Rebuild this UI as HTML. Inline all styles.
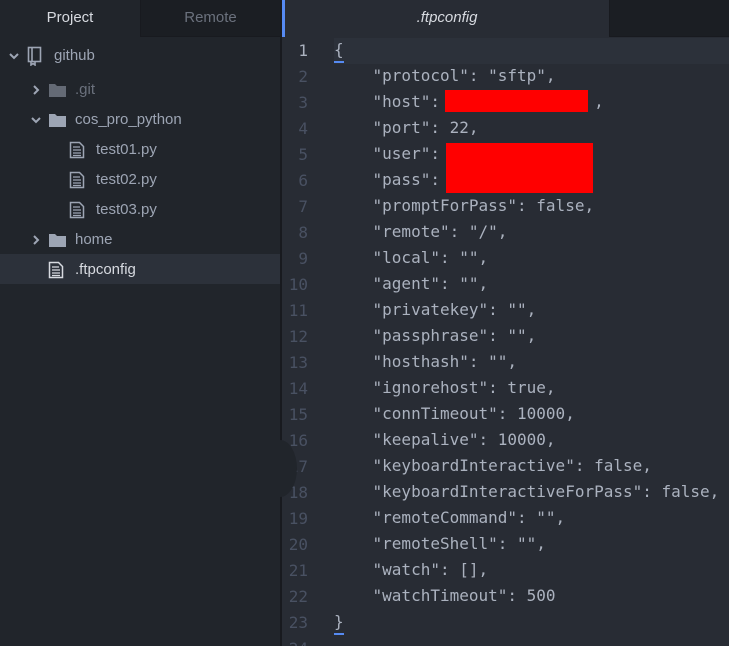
<!DOCTYPE html>
<html style="overflow:hidden"><head><style>
*{margin:0;padding:0;box-sizing:border-box}
body{width:729px;height:646px;overflow:hidden;background:#282c34;font-family:"Liberation Sans",sans-serif;position:relative}
.side{position:absolute;left:0;top:0;width:280px;height:646px;background:#21252b}
.tab{position:absolute;top:0;height:37px;line-height:36px;text-align:center;font-size:15px}
.tree div{position:absolute;height:30px;line-height:30px;font-size:15px;color:#9da5b4;white-space:nowrap}
.code{position:absolute;left:282px;top:37px;width:447px;height:609px;overflow:hidden;background:#282c34}
.ln{position:absolute;width:26px;text-align:right;left:0;font:16px "DejaVu Sans Mono","Liberation Mono",monospace;color:#495162}
.cl{position:absolute;left:52px;font:16px "DejaVu Sans Mono","Liberation Mono",monospace;color:#abb2bf;white-space:pre}
</style></head><body>
<div class="side">
<div class="tab" style="left:0;width:140px;color:#d7dae0;background:#21252b">Project</div>
<div class="tab" style="left:140px;width:140px;color:#6b717d;background:#1b1e23;border-left:1px solid #181a1f;border-bottom:1px solid #181a1f">Remote</div>
<div class="tree">
<div style="top:41px;left:8px"><svg width="12" height="10" style="vertical-align:middle"><path d="M2 3l4 4 4-4" stroke="#9da5b4" stroke-width="2" fill="none"/></svg></div>
<div style="top:41px;left:27px"><svg width="16" height="20" style="vertical-align:middle"><rect x="1.5" y="1.5" width="12" height="14" fill="none" stroke="#9da5b4" stroke-width="1.6"/><path d="M5 2v13M4 15v4l2-1.5 2 1.5v-4" stroke="#9da5b4" stroke-width="1.6" fill="none"/></svg></div>
<div style="top:41px;left:54px">github</div>
<div style="top:75px;left:31px"><svg width="10" height="12" style="vertical-align:middle"><path d="M3 2l4 4-4 4" stroke="#9da5b4" stroke-width="2" fill="none"/></svg></div>
<div style="top:75px;left:48px"><svg width="20" height="16" style="vertical-align:middle"><path d="M1 2h6l2 2h9v11H1z" fill="#646a75"/></svg></div>
<div style="top:75px;left:75px;color:#6b717d">.git</div>
<div style="top:105px;left:30px"><svg width="12" height="10" style="vertical-align:middle"><path d="M2 3l4 4 4-4" stroke="#9da5b4" stroke-width="2" fill="none"/></svg></div>
<div style="top:105px;left:48px"><svg width="20" height="16" style="vertical-align:middle"><path d="M1 2h6l2 2h9v11H1z" fill="#9da5b4"/></svg></div>
<div style="top:105px;left:75px">cos_pro_python</div>
<div style="top:135px;left:69px"><svg width="16" height="18" style="vertical-align:middle"><path d="M1.5 1.5h9l4 4v11h-13z" fill="none" stroke="#9da5b4" stroke-width="1.5"/><path d="M4 6h7M4 9h8M4 12h8M4 14.5h8" stroke="#9da5b4" stroke-width="1.3"/></svg></div>
<div style="top:135px;left:96px">test01.py</div>
<div style="top:165px;left:69px"><svg width="16" height="18" style="vertical-align:middle"><path d="M1.5 1.5h9l4 4v11h-13z" fill="none" stroke="#9da5b4" stroke-width="1.5"/><path d="M4 6h7M4 9h8M4 12h8M4 14.5h8" stroke="#9da5b4" stroke-width="1.3"/></svg></div>
<div style="top:165px;left:96px">test02.py</div>
<div style="top:195px;left:69px"><svg width="16" height="18" style="vertical-align:middle"><path d="M1.5 1.5h9l4 4v11h-13z" fill="none" stroke="#9da5b4" stroke-width="1.5"/><path d="M4 6h7M4 9h8M4 12h8M4 14.5h8" stroke="#9da5b4" stroke-width="1.3"/></svg></div>
<div style="top:195px;left:96px">test03.py</div>
<div style="top:225px;left:31px"><svg width="10" height="12" style="vertical-align:middle"><path d="M3 2l4 4-4 4" stroke="#9da5b4" stroke-width="2" fill="none"/></svg></div>
<div style="top:225px;left:48px"><svg width="20" height="16" style="vertical-align:middle"><path d="M1 2h6l2 2h9v11H1z" fill="#9da5b4"/></svg></div>
<div style="top:225px;left:75px">home</div>
<div style="top:254px;left:0;width:280px;height:30px;background:#2c313a"></div>
<div style="top:255px;left:48px"><svg width="16" height="18" style="vertical-align:middle"><path d="M1.5 1.5h9l4 4v11h-13z" fill="none" stroke="#d7dae0" stroke-width="1.5"/><path d="M4 6h7M4 9h8M4 12h8M4 14.5h8" stroke="#d7dae0" stroke-width="1.3"/></svg></div>
<div style="top:255px;left:75px;color:#d7dae0">.ftpconfig</div>
</div>
</div>
<div style="position:absolute;left:280px;top:0;width:2px;height:646px;background:#181a1f"></div>
<div style="position:absolute;left:282px;top:0;width:447px;height:37px;background:#1b1e23;border-bottom:1px solid #181a1f"></div>
<div style="position:absolute;left:282px;top:0;width:3px;height:37px;background:#568af2"></div>
<div class="tab" style="left:285px;width:325px;background:#282c34;color:#d7dae0;font-style:italic;border-right:1px solid #181a1f">.ftpconfig</div>
<div class="code">
<div style="position:absolute;left:52px;right:0;top:1px;height:26px;background:#2c313a"></div>
<div id="g"></div>
</div>
<div style="position:absolute;left:263px;top:440px;width:34px;height:57px;border-radius:50%;background:#21252b;clip-path:inset(0 0 0 17px)"></div>
<div style="position:absolute;left:445px;top:90px;width:143px;height:22px;background:#f00"></div>
<div style="position:absolute;left:446px;top:143px;width:147px;height:50px;background:#f00"></div>
<script>
var L=['{','    "protocol": "sftp",','    "host":                ,','    "port": 22,','    "user":','    "pass":','    "promptForPass": false,','    "remote": "/",','    "local": "",','    "agent": "",','    "privatekey": "",','    "passphrase": "",','    "hosthash": "",','    "ignorehost": true,','    "connTimeout": 10000,','    "keepalive": 10000,','    "keyboardInteractive": false,','    "keyboardInteractiveForPass": false,','    "remoteCommand": "",','    "remoteShell": "",','    "watch": [],','    "watchTimeout": 500','}',''];
var h='';for(var i=0;i<24;i++){var t=i*26+3;h+='<div class="ln" style="top:'+(t+1)+'px;'+(i==0?'color:#abb2bf':'')+'">'+(i+1)+'</div><div class="cl" style="top:'+t+'px">'+L[i]+'</div>';}
h+='<div style="position:absolute;left:52px;top:24px;width:10px;height:2px;background:#568af2"></div><div style="position:absolute;left:52px;top:596px;width:10px;height:2px;background:#568af2"></div>';
document.getElementById('g').innerHTML=h;
</script>
</body></html>
